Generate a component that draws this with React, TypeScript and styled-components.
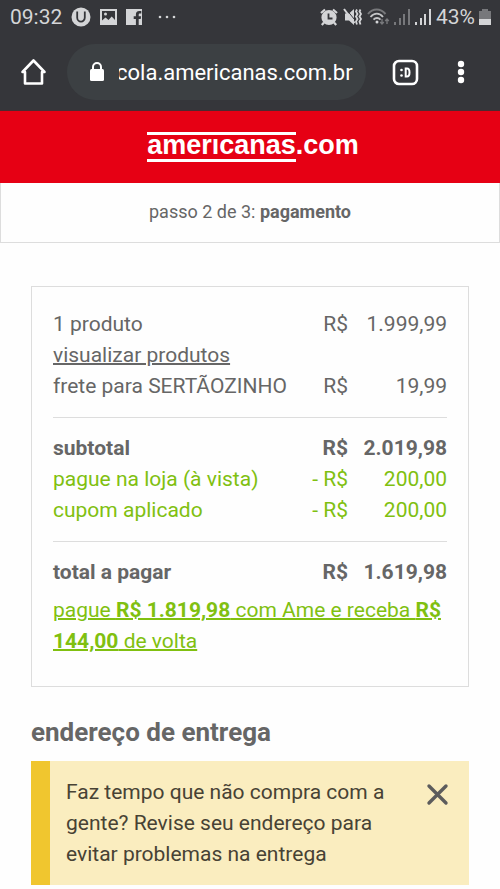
import React, { useLayoutEffect, useRef } from "react";
import styled, { createGlobalStyle, css } from "styled-components";

const GlobalStyle = createGlobalStyle`
  *, *::before, *::after { box-sizing: border-box; }
  body {
    margin: 0;
    background: #fefefe;
    color: #666;
    font-family: Roboto, "Liberation Sans", sans-serif;
    font-size: 21px;
    line-height: 31px;
  }
  svg { display: block; flex: none; }
`;

const StatusBar = styled.div`
  display: flex;
  align-items: center;
  justify-content: space-between;
  height: 34px;
  padding: 0 9px 0 10px;
  background: #35363a;
  color: #d4d5d7;
  font-size: 21px;
`;

const StatusGroup = styled.div<{ $gap: number }>`
  display: flex;
  align-items: center;
  gap: ${(p) => p.$gap}px;
`;

const BrowserBar = styled.div`
  display: flex;
  align-items: center;
  height: 77px;
  padding: 0 25px 0 20px;
  background: #35363a;
  border-bottom: 1px solid #4c2a30;
`;

const IconButton = styled.button`
  display: flex;
  flex: none;
  padding: 0;
  border: 0;
  background: none;
  color: #fff;
  cursor: pointer;
`;

const AddressPill = styled.label`
  display: flex;
  flex: 1;
  min-width: 0;
  align-items: center;
  gap: 14px;
  height: 56px;
  margin: 0 26px 0 20px;
  padding: 0 13px 0 22px;
  border-radius: 28px;
  background: #3c4043;
`;

const AddressInput = styled.input`
  flex: 1;
  min-width: 0;
  padding: 0;
  border: 0;
  outline: 0;
  background: none;
  color: #fff;
  font: inherit;
  font-size: 22px;
`;

const TabActions = styled.div`
  display: flex;
  align-items: center;
  gap: 28px;
`;

const Brand = styled.header`
  display: flex;
  justify-content: center;
  align-items: center;
  height: 72px;
  padding-left: 6px;
  background: #e60014;
`;

const BrandLink = styled.a`
  display: flex;
  align-items: baseline;
  color: #fff;
  font-family: "Liberation Sans", Arial, sans-serif;
  font-size: 27px;
  font-weight: 700;
  line-height: 20px;
  text-decoration: none;
`;

const BrandName = styled.span`
  padding-bottom: 4px;
  border-top: 3px solid #fff;
  border-bottom: 3px solid #fff;
`;

const Step = styled.div`
  padding: 13px 0 15px;
  border: 1px solid #ddd;
  border-top: 0;
  font-size: 18px;
  text-align: center;
`;

const Content = styled.main`
  padding: 43px 31px 4px;
`;

const Card = styled.section`
  padding: 22px 21px 29px;
  border: 1px solid #ddd;
`;

const Group = styled.div`
  & + & {
    margin-top: 15px;
    padding-top: 15px;
    border-top: 1px solid #ddd;
  }
`;

const Row = styled.div<{ $tone?: "strong" | "discount" }>`
  display: grid;
  grid-template-columns: 1fr auto 99px;
  ${(p) => p.$tone === "strong" && css`font-weight: 700;`}
  ${(p) => p.$tone === "discount" && css`color: #80c010;`}
`;

const Amount = styled.span`
  text-align: right;
`;

const TextLink = styled.a<{ $accent?: boolean }>`
  display: block;
  width: fit-content;
  margin-top: ${(p) => (p.$accent ? 7 : 0)}px;
  color: ${(p) => (p.$accent ? "#80c010" : "inherit")};
  text-decoration: underline;
  text-decoration-thickness: 2px;
  text-decoration-skip-ink: auto;
`;

const Heading = styled.h2`
  margin: 29px 0 13px;
  font-size: 26px;
  line-height: 32px;
`;

const Alert = styled.div`
  display: flex;
  align-items: flex-start;
  justify-content: space-between;
  gap: 24px;
  padding: 16px 20px 15px 16px;
  border-left: 19px solid #f0c62f;
  background: #faedbf;
  color: #474234;
`;

const AlertText = styled.p`
  margin: 0;
  max-width: 340px;
`;

const CloseButton = styled(IconButton)`
  margin-top: 6px;
  color: #5c5c5c;
`;

function Signal({ color }: { color: string }) {
  return (
    <svg width="17" height="18" viewBox="0 0 17 18" fill={color} aria-hidden="true">
      <rect x="0" y="14" width="2" height="3" />
      <rect x="5" y="10" width="2" height="7" />
      <rect x="9" y="6" width="2" height="11" />
      <rect x="14" y="1" width="2" height="16" />
    </svg>
  );
}

function NotificationIcons() {
  return (
    <>
      <svg width="20" height="20" viewBox="0 0 20 20" aria-hidden="true">
        <circle cx="10" cy="10" r="9.5" fill="#d4d5d7" />
        <path d="M6.200 4.500v6a3.800 4.200 0 0 0 7.600 0v-6" fill="none" stroke="#35363a" strokeWidth="1.800" />
      </svg>
      <svg width="17" height="16" viewBox="0 0 17 16" aria-hidden="true">
        <path
          fillRule="evenodd"
          fill="#d4d5d7"
          d="M0 0h17v16H0zM2 2v9.500l3.500-3 3 2.500 3.200-3.500L15 11V2zM5.500 3.500a1.500 1.500 0 1 1 0 3 1.500 1.500 0 0 1 0-3z"
        />
      </svg>
      <svg width="16" height="16" viewBox="0 0 16 16" aria-hidden="true">
        <path fill="#d4d5d7" d="M0 0h16v16h-3.300v-6h2l.4-2.700h-2.400V5.800c0-.8.3-1.300 1.400-1.300h1.200V2.100h-2c-2.400 0-3.400 1.300-3.400 3.300v1.900H7.700V10h2.200v6H0z" />
      </svg>
      <svg width="26" height="4" viewBox="0 0 26 4" fill="#d4d5d7" aria-hidden="true">
        <circle cx="9" cy="2" r="1.300" />
        <circle cx="16" cy="2" r="1.300" />
        <circle cx="23" cy="2" r="1.300" />
      </svg>
    </>
  );
}

function DeviceIcons() {
  return (
    <>
      <svg width="18" height="18" viewBox="0 0 18 18" aria-hidden="true">
        <circle cx="9" cy="9.500" r="6" fill="none" stroke="#d4d5d7" strokeWidth="3.200" />
        <circle cx="9" cy="9.500" r="5" fill="#d4d5d7" />
        <path d="M1 5l4-3.500M17 5l-4-3.500M4 14.500L1.800 17M14 14.500l2.200 2.500" fill="none" stroke="#d4d5d7" strokeWidth="2.200" />
        <path d="M8.500 5.500v5h4" fill="none" stroke="#35363a" strokeWidth="1.800" />
      </svg>
      <svg width="21" height="18" viewBox="0 0 21 18" aria-hidden="true">
        <path d="M3 5.500h4L12 1v16l-5-4.500H3z" fill="#d4d5d7" />
        <path d="M3.500.5l9 11" stroke="#35363a" strokeWidth="1" />
        <path d="M2 1l10.500 14" stroke="#d4d5d7" strokeWidth="2" />
        <path d="M15 1.500l-1 2 1.500 2.500-1.500 2.500 1.500 2.500-1.500 2.500 1 3M18.500 1.500l-1 2L19 6l-1.500 2.500L19 11l-1.500 2.500 1 3" fill="none" stroke="#d4d5d7" strokeWidth="1.800" />
      </svg>
      <svg width="23" height="18" viewBox="0 0 23 18" fill="none" aria-hidden="true">
        <path d="M1 6c4.800-6 12.500-6 17.500 0" stroke="#77787b" strokeWidth="2" />
        <path d="M3.500 9c3.700-4.500 9-4.500 12.500 0M6.500 11.700c2-2.300 5-2.300 7 0" stroke="#c4c5c7" strokeWidth="1.800" />
        <circle cx="10" cy="14" r="1.500" fill="#d4d5d7" />
        <path d="M15 11v5M13.200 14l1.800 2 1.800-2M20 16v-5M18.200 13l1.800-2 1.800 2" stroke="#77787b" strokeWidth="1.400" />
      </svg>
      <Signal color="#77787b" />
      <Signal color="#d4d5d7" />
    </>
  );
}

function AddressBar() {
  const input = useRef<HTMLInputElement>(null);
  useLayoutEffect(() => {
    const field = input.current;
    if (!field) return;
    const showEnd = () => {
      field.scrollLeft = field.scrollWidth;
    };
    showEnd();
    document.fonts.ready.then(showEnd);
  }, []);
  return (
    <AddressPill>
      <svg width="16" height="20" viewBox="0 0 16 20" aria-hidden="true">
        <path d="M4 8V5a4 4 0 0 1 8 0v3" fill="none" stroke="#fff" strokeWidth="2" />
        <rect x="1" y="7" width="14" height="12" rx="1.500" fill="#fff" />
      </svg>
      <AddressInput ref={input} aria-label="Endereço" defaultValue="cola.americanas.com.br" />
    </AddressPill>
  );
}

export default function App() {
  return (
    <>
      <GlobalStyle />
      <StatusBar>
        <StatusGroup $gap={9}>
          <span>09:32</span>
          <NotificationIcons />
        </StatusGroup>
        <StatusGroup $gap={4}>
          <DeviceIcons />
          <span>43%</span>
          <svg width="12" height="18" viewBox="0 0 12 18" aria-hidden="true">
            <path d="M3 1h6v2h3v8H0V3h3z" fill="#77787b" />
            <path d="M0 11h12v6H0z" fill="#d4d5d7" />
          </svg>
        </StatusGroup>
      </StatusBar>
      <BrowserBar>
        <IconButton aria-label="Página inicial">
          <svg width="27" height="28" viewBox="0 0 27 28" fill="none" stroke="#fff" strokeWidth="2.600" strokeLinejoin="round" strokeLinecap="round" aria-hidden="true">
            <path d="M13.500 2.500l11 11.500H22v11.500H5V14H2.500z" />
          </svg>
        </IconButton>
        <AddressBar />
        <TabActions>
          <IconButton aria-label="Abas abertas">
            <svg width="27" height="27" viewBox="0 0 27 27" fill="none" stroke="#fff" aria-hidden="true">
              <rect x="2" y="2" width="23" height="23" rx="5" strokeWidth="2.600" />
              <path d="M13.700 9.500v8h1.300c1.800 0 2.500-1.500 2.500-4s-.7-4-2.500-4z" strokeWidth="2" />
              <circle cx="9.500" cy="11" r="1.300" fill="#fff" stroke="none" />
              <circle cx="9.500" cy="16.500" r="1.300" fill="#fff" stroke="none" />
            </svg>
          </IconButton>
          <IconButton aria-label="Mais opções">
            <svg width="28" height="24" viewBox="0 0 28 24" fill="#fff" aria-hidden="true">
              <circle cx="14" cy="4" r="3.200" />
              <circle cx="14" cy="12" r="3.200" />
              <circle cx="14" cy="20" r="3.200" />
            </svg>
          </IconButton>
        </TabActions>
      </BrowserBar>

      <Brand>
        <BrandLink href="#" aria-label="americanas.com">
          <BrandName>amerıcanas</BrandName>
          <span>.com</span>
        </BrandLink>
      </Brand>
      <Step>
        passo 2 de 3: <strong>pagamento</strong>
      </Step>

      <Content>
        <Card>
          <Group>
            <Row>
              <span>1 produto</span>
              <span>R$</span>
              <Amount>1.999,99</Amount>
            </Row>
            <TextLink href="#">visualizar produtos</TextLink>
            <Row>
              <span>frete para SERTÃOZINHO</span>
              <span>R$</span>
              <Amount>19,99</Amount>
            </Row>
          </Group>
          <Group>
            <Row $tone="strong">
              <span>subtotal</span>
              <span>R$</span>
              <Amount>2.019,98</Amount>
            </Row>
            <Row $tone="discount">
              <span>pague na loja (à vista)</span>
              <span>- R$</span>
              <Amount>200,00</Amount>
            </Row>
            <Row $tone="discount">
              <span>cupom aplicado</span>
              <span>- R$</span>
              <Amount>200,00</Amount>
            </Row>
          </Group>
          <Group>
            <Row $tone="strong">
              <span>total a pagar</span>
              <span>R$</span>
              <Amount>1.619,98</Amount>
            </Row>
            <TextLink href="#" $accent>
              pague <strong>R$ 1.819,98</strong> com Ame e receba <strong>R$ 144,00</strong> de volta
            </TextLink>
          </Group>
        </Card>

        <Heading>endereço de entrega</Heading>
        <Alert role="alert">
          <AlertText>
            Faz tempo que não compra com a gente? Revise seu endereço para evitar problemas na entrega
          </AlertText>
          <CloseButton aria-label="Fechar">
            <svg width="23" height="23" viewBox="0 0 23 23" fill="none" stroke="currentColor" strokeWidth="3.400" strokeLinecap="round" aria-hidden="true">
              <path d="M3 3l17 17M20 3L3 20" />
            </svg>
          </CloseButton>
        </Alert>
      </Content>
    </>
  );
}
